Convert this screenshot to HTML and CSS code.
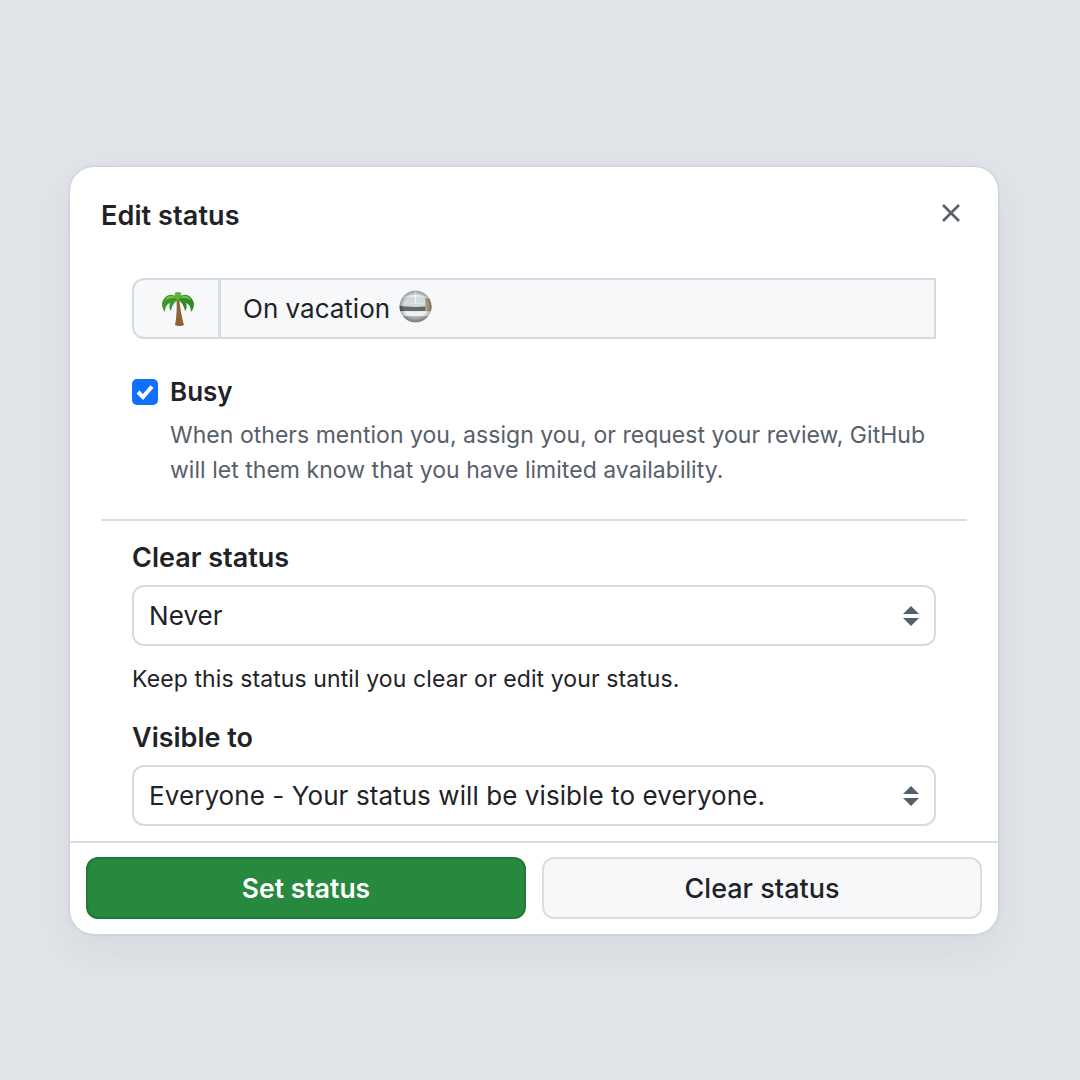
FILE: index.html
```html
<!DOCTYPE html>
<html lang="en">
<head>
<meta charset="utf-8">
<title>Edit status</title>
<link rel="stylesheet" href="styles.css">
</head>
<body>
<main class="dialog">
  <header class="dialog-header">
    <h1 class="dialog-title">Edit status</h1>
    <svg class="close-icon" viewBox="0 0 20 20" aria-label="Close"><path d="M2 2 18 18M18 2 2 18"/></svg>
  </header>
  <section class="status-section">
    <div class="status-input">
      <div class="emoji-button">
        <svg class="emoji-palm" viewBox="0 0 32 34">
          <path d="M14.500 8C15 16 14.500 26 13 33c2 1.500 7 1.500 9 0-2-7-4-17-4.500-25z" fill="#8f6538"/>
          <path d="M16 7C11 0 3 2 0 11c0 4 1 7 3 9 0-5 2-8 5-9-1 3-1 6 1 8 1-5 3-9 7-11z" fill="#3f962a"/>
          <path d="M16 7c5-7 13-5 16 4 0 4-1 7-3 9 0-5-2-8-5-9 1 3 1 6-1 8-1-5-3-9-7-11z" fill="#358a24"/>
          <path d="M16 9C12 4 11 0 16 0s4 4 0 9z" fill="#62b23a"/>
          <path d="M14 6C10 2 5 4 3 8c4-2 7-2 11-2zM18 6c4-4 9-2 11 2-4-2-7-2-11-2z" fill="#74c046"/>
        </svg>
      </div>
      <div class="status-text">
        <span>On vacation</span>
        <svg class="emoji-ship" viewBox="0 0 34 34">
          <defs>
            <clipPath id="disc"><circle cx="17" cy="17" r="16.500"/></clipPath>
            <radialGradient id="shade" cx="50%" cy="50%" r="50%">
              <stop offset="70%" stop-color="#000" stop-opacity="0"/>
              <stop offset="100%" stop-color="#000" stop-opacity=".3"/>
            </radialGradient>
          </defs>
          <g clip-path="url(#disc)">
            <rect width="34" height="14" fill="#d3dade"/>
            <path d="M17 1v13M4 8c7-3 19-3 26 0" stroke="#f5f7f8" stroke-width="1.200" fill="none"/>
            <path d="M0 15c10 2 24 2 34 0v7H0z" fill="#65686a"/>
            <path d="M0 13c10 2 24 2 34 0v3c-10 2-24 2-34 0z" fill="#d3dade"/>
            <rect x="27" y="9" width="7" height="13" fill="#ada084"/>
            <rect y="22" width="34" height="5" fill="#eef0f1"/>
            <rect y="27" width="34" height="7" fill="#ababab"/>
            <circle cx="17" cy="17" r="16.500" fill="url(#shade)"/>
          </g>
        </svg>
      </div>
    </div>
    <div class="busy-row">
      <span class="checkbox">
        <svg viewBox="0 0 26 26"><path d="M6 13 11 18 20 7.500"/></svg>
      </span>
      <div class="busy-copy">
        <div class="busy-label">Busy</div>
        <p class="busy-note">When others mention you, assign you, or request your review, GitHub will let them know that you have limited availability.</p>
      </div>
    </div>
  </section>
  <hr class="divider">
  <section class="options-section">
    <div class="field-label">Clear status</div>
    <div class="select">
      <span>Never</span>
      <svg class="select-arrows" viewBox="0 0 16 20"><path d="M8 0 16 8H0zM0 12H16L8 20z"/></svg>
    </div>
    <p class="field-note">Keep this status until you clear or edit your status.</p>
    <div class="field-label visible-label">Visible to</div>
    <div class="select">
      <span>Everyone - Your status will be visible to everyone.</span>
      <svg class="select-arrows" viewBox="0 0 16 20"><path d="M8 0 16 8H0zM0 12H16L8 20z"/></svg>
    </div>
  </section>
  <footer class="dialog-footer">
    <button class="btn btn-primary" type="button">Set status</button>
    <button class="btn btn-secondary" type="button">Clear status</button>
  </footer>
</main>
</body>
</html>
```

FILE: styles.css
```css
* { box-sizing: border-box; }
html, body { margin: 0; height: 100%; }
body {
  width: 1080px;
  height: 1080px;
  background: #e1e4e8;
  font-family: Inter, "Liberation Sans", sans-serif;
  color: #1f2328;
  padding: 167px 0 0 70px;
  overflow: hidden;
}
.dialog {
  width: 928px;
  height: 767px;
  background: #fff;
  border-radius: 24px;
  box-shadow: 0 0 3px rgba(140, 149, 159, .45), 0 16px 40px rgba(140, 149, 159, .14);
  display: flex;
  flex-direction: column;
}
.dialog-header {
  height: 111px;
  padding: 33px 37px 0 31px;
  display: flex;
  justify-content: space-between;
  align-items: flex-start;
}
.dialog-title { margin: 0; font-size: 27px; line-height: 32px; font-weight: 600; letter-spacing: .1px; }
.close-icon { width: 20px; height: 20px; margin-top: 3px; fill: none; stroke: #57606a; stroke-width: 2.600; }
.status-section { padding: 0 62px; }
.status-input {
  height: 61px;
  display: flex;
  border: 2px solid #d5dbe2;
  border-radius: 12px 0 0 12px;
  background: #f6f8fa;
}
.emoji-button {
  width: 87px;
  padding-left: 3px;
  border-right: 3px solid #d8dee4;
  display: flex;
  align-items: center;
  justify-content: center;
}
.emoji-palm { width: 32px; height: 34px; }
.status-text {
  flex: 1;
  display: flex;
  align-items: center;
  gap: 9px;
  padding-left: 22px;
  font-size: 26px;
}
.emoji-ship { width: 33px; height: 33px; margin-top: -4px; }
.busy-row { display: flex; gap: 12px; margin-top: 40px; }
.checkbox {
  width: 26px;
  height: 26px;
  flex: none;
  background: #0f6fff;
  border-radius: 5px;
  display: flex;
}
.checkbox svg { fill: none; stroke: #fff; stroke-width: 4; }
.busy-label { font-size: 26px; line-height: 26px; font-weight: 600; }
.busy-note { margin: 13px 0 0; font-size: 23px; line-height: 35px; letter-spacing: .03px; color: #57606a; }
.divider { margin: 31px 31px 0; border: 0; border-top: 2px solid #d8dee4; }
.options-section { padding: 21px 62px 0; }
.field-label { font-size: 27px; line-height: 32px; font-weight: 600; }
.visible-label { margin-top: 27px; }
.select {
  height: 61px;
  margin-top: 11px;
  padding: 0 15px;
  border: 2px solid #d5dbe2;
  border-radius: 12px;
  display: flex;
  align-items: center;
  justify-content: space-between;
  font-size: 26px;
  letter-spacing: .08px;
}
.select-arrows { width: 16px; height: 20px; fill: #57606a; }
.field-note { margin: 17px 0 0; font-size: 23px; line-height: 32px; letter-spacing: .1px; }
.dialog-footer {
  margin-top: 15px;
  padding: 14px 16px 15px;
  border-top: 2px solid #d8dee4;
  display: flex;
  gap: 16px;
  flex: 1;
}
.btn {
  flex: 1;
  border-radius: 12px;
  font-family: inherit;
  font-size: 27px;
  font-weight: 500;
}
.btn-primary { background: #26893e; color: #fff; border: 2px solid #1f7a35; font-size: 26.500px; font-weight: 600; }
.btn-secondary { background: #f6f8fa; color: #1f2328; border: 2px solid #d8dee4; }
```
